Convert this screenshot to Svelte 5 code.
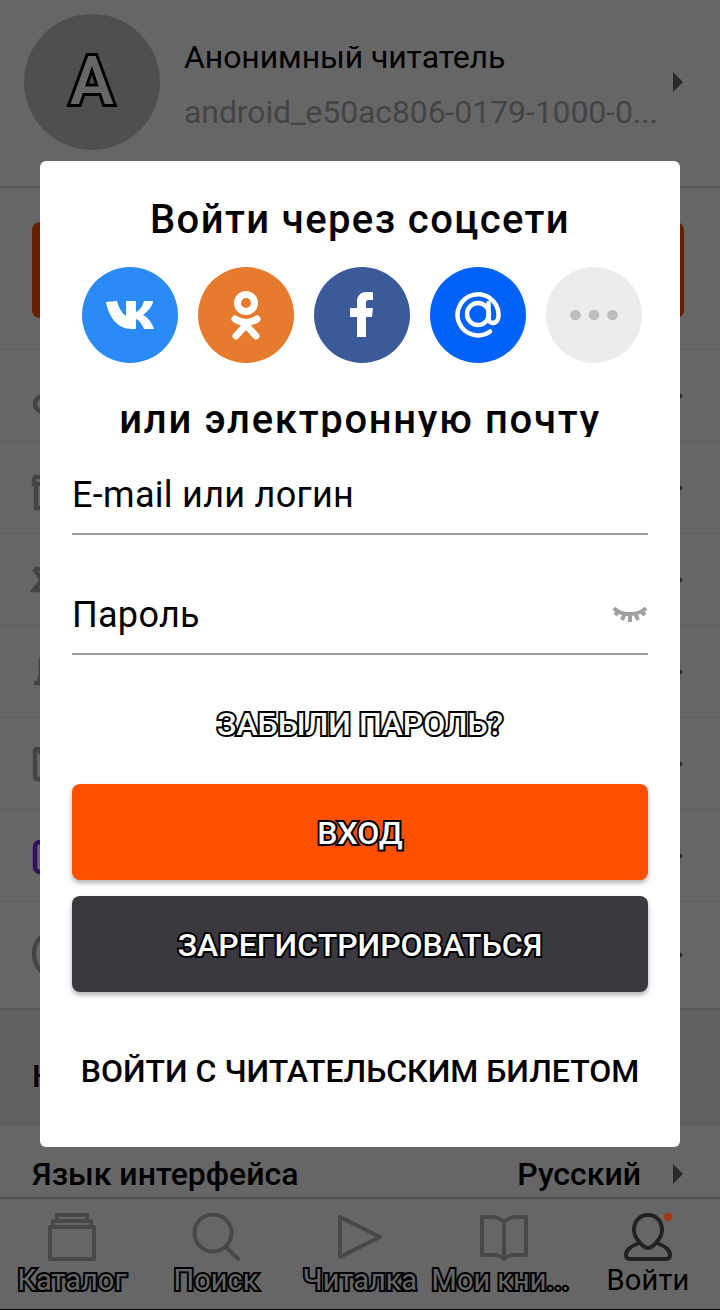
<script>
  const rows = [
    { icon: "M3 32a8 8 0 1 0 16 0a8 8 0 1 0-16 0" },
    { icon: "M2 13h10M2 13v7h10M4 22v22h10" },
    { icon: "M2 13h10M2 13l8 11L2 34h10" },
    { icon: "M2 35h10M6 35Q9 30 9 20V9" },
    { icon: "M10 9H5a2 2 0 0 0-2 2v26a2 2 0 0 0 2 2h6M5 9l8 8" },
    { icon: "M12 10H8a5 5 0 0 0-5 5v20a5 5 0 0 0 5 5h4", purple: true },
    { icon: "M2 23a24 24 0 1 0 48 0a24 24 0 1 0-48 0" }
  ];
  const tabs = [
    { label: "Каталог", outlined: true },
    { label: "Поиск", outlined: true },
    { label: "Читалка", outlined: true },
    { label: "Мои кни...", outlined: true },
    { label: "Войти", outlined: false }
  ];
</script>

<div class="page">
  <header class="profile">
    <div class="avatar"><span>A</span></div>
    <div class="who">
      <div class="name">Анонимный читатель</div>
      <div class="login">android_e50ac806-0179-1000-0...</div>
    </div>
    <i class="arrow"></i>
  </header>

  <section class="promo"><div class="promo-btn"></div></section>

  {#each rows as row, i}
    <div class="row" class:last={i === 6}>
      <svg class="row-icon" viewBox="0 0 48 48" class:purple={row.purple}>
        <path d={row.icon} />
      </svg>
      <i class="arrow"></i>
    </div>
  {/each}

  <section class="settings"><h3>Н</h3></section>

  <div class="lang">
    <span>Язык интерфейса</span>
    <span class="lang-value">Русский</span>
    <i class="arrow"></i>
  </div>

  <nav class="tabs">
    {#each tabs as tab, i}
      <div class="tab">
        <svg viewBox="0 0 48 48" class:active={i === 4}>
          {#if i === 0}
            <path d="M2 14h44v32H2zM5 14V8h38v6M9 8V2h30v6" />
          {:else if i === 1}
            <circle cx="21" cy="20" r="18.5" />
            <path d="M34 34l12 12" />
          {:else if i === 2}
            <path d="M4 4v40l40-20z" />
          {:else if i === 3}
            <path d="M24 9Q19 4 12 4H2v38h12q6 0 10 4q4-4 10-4h12V4H36Q29 4 24 9zM24 9v37" />
          {:else}
            <path d="M24 2C15 2 10 9 10 17c0 9 10 18 14 18s14-9 14-18C38 9 33 2 24 2z" />
            <path d="M15 30C8 33 2 36 2 42c0 3 2 4 5 4h34c3 0 5-1 5-4c0-6-6-9-13-12" />
          {/if}
        </svg>
        <span class:outlined={tab.outlined}>{tab.label}</span>
        {#if i === 4}<b class="dot"></b>{/if}
      </div>
    {/each}
  </nav>

  <div class="scrim"></div>

  <div class="modal">
    <h2 class="title">Войти через соцсети</h2>
    <div class="socials">
      <div class="social vk">
        <svg viewBox="0 0 96 96"><path class="fill" d="M24 35l11-1c2 8 6 13 9 15V34h10v11c3-1 7-6 8-11h9c0 5-6 11-10 14c4 2 9 7 11 14H62c-2-5-5-9-8-10v10h-4C36 62 27 51 24 35z" /></svg>
      </div>
      <div class="social ok">
        <svg viewBox="0 0 96 96">
          <circle class="line" cx="48" cy="36" r="8.5" />
          <path class="line" d="M37 52q11 7 22 0M48 58L38 69M48 58l10 11" />
        </svg>
      </div>
      <div class="social fb">
        <svg viewBox="0 0 96 96"><path class="fill" d="M43 70V50h-7v-9h7v-6c0-7 4-10 10-10c3 0 5 0 6 .5V33h-4c-3 0-3 2-3 4v4h7l-1 9h-6v20z" /></svg>
      </div>
      <div class="social mail">
        <svg viewBox="0 0 96 96">
          <circle class="line thin" cx="48" cy="47" r="11" />
          <path class="line thin" d="M60 64.5A20.5 20.5 0 1 1 68.5 47v2c0 4-2.500 7-5.500 7c-2.500 0-4.500-2-4.500-5V36" />
        </svg>
      </div>
      <div class="social more">
        <svg viewBox="0 0 96 96">
          <circle cx="29.500" cy="48" r="5.300" />
          <circle cx="48" cy="48" r="5.300" />
          <circle cx="66.500" cy="48" r="5.300" />
        </svg>
      </div>
    </div>
    <div class="clip"><h2 class="title wide">или электронную почту</h2></div>

    <div class="field first"><span>E-mail или логин</span></div>
    <div class="field">
      <span>Пароль</span>
      <svg class="eye" viewBox="0 0 36 18">
        <path d="M2 3C8 11 27 11 34 3M6 7L3 10M12 10l-2 5M18 11v6M24 10l2 5M30 7l3 3" />
      </svg>
    </div>

    <div class="forgot">ЗАБЫЛИ ПАРОЛЬ?</div>
    <div class="btn enter"><span>ВХОД</span></div>
    <div class="btn register"><span>ЗАРЕГИСТРИРОВАТЬСЯ</span></div>
    <div class="ticket">ВОЙТИ С ЧИТАТЕЛЬСКИМ БИЛЕТОМ</div>
  </div>
</div>

<style>
  :global(body) {
    margin: 0;
    background: #666;
  }
  .page {
    position: relative;
    width: 720px;
    height: 1310px;
    overflow: hidden;
    background: #fff;
    color: #000;
    font-family: Roboto, "Noto Sans", sans-serif;
    display: flex;
    flex-direction: column;
  }
  .profile {
    height: 188px;
    box-sizing: border-box;
    padding: 14px 37px 0 24px;
    border-bottom: 2px solid #ddd;
    display: flex;
    flex: none;
  }
  .avatar {
    width: 136px;
    height: 136px;
    border-radius: 50%;
    background: #c6c6c6;
    display: flex;
    align-items: center;
    justify-content: center;
    flex: none;
  }
  .avatar span {
    font-size: 66px;
    line-height: 1;
    font-weight: 500;
    color: #fff;
    -webkit-text-stroke: 6px #000;
    paint-order: stroke fill;
  }
  .who {
    margin-left: 24px;
    flex: 1;
    min-width: 0;
    padding-top: 23px;
  }
  .name {
    font-size: 32px;
    line-height: 40px;
    letter-spacing: -0.1px;
  }
  .login {
    font-size: 32px;
    line-height: 40px;
    margin-top: 15px;
    letter-spacing: -0.1px;
    color: #aaa;
    white-space: nowrap;
  }
  .arrow {
    flex: none;
    width: 0;
    height: 0;
    border-left: 10px solid #666;
    border-top: 10px solid transparent;
    border-bottom: 10px solid transparent;
    margin-left: auto;
    align-self: center;
  }
  .profile .arrow {
    margin-top: -36px;
  }
  .promo {
    height: 162px;
    box-sizing: border-box;
    padding: 34px 36px 0 32px;
    border-bottom: 1px solid #eee;
    flex: none;
  }
  .promo-btn {
    height: 96px;
    background: #ff5000;
    border-radius: 8px;
  }
  .row {
    height: 92px;
    box-sizing: border-box;
    padding: 0 37px 0 32px;
    border-bottom: 1px solid #eee;
    display: flex;
    align-items: center;
    flex: none;
  }
  .row.last {
    height: 108px;
    border-bottom: 2px solid #ddd;
  }
  .row-icon {
    width: 48px;
    height: 48px;
    overflow: visible;
    fill: none;
    stroke: #aaa;
    stroke-width: 4.5;
  }
  .row-icon.purple {
    stroke: #7d26f5;
  }
  .settings {
    height: 117px;
    box-sizing: border-box;
    padding: 14px 32px 0;
    background: #f0f0f0;
    flex: none;
    display: flex;
    align-items: center;
  }
  .settings h3 {
    margin: 0;
    width: 8px;
    overflow: hidden;
    font-size: 32px;
    font-weight: 500;
  }
  .lang {
    height: 70px;
    box-sizing: border-box;
    padding: 24px 37px 0 32px;
    display: flex;
    align-items: center;
    font-size: 32px;
    font-weight: 500;
    flex: none;
  }
  .lang-value {
    margin-left: auto;
  }
  .lang .arrow {
    margin-left: 32px;
  }
  .tabs {
    height: 113px;
    box-sizing: border-box;
    flex: none;
    border-top: 2px solid #ccc;
    border-bottom: 1px solid #000;
    display: flex;
    padding-top: 14px;
  }
  .tab {
    position: relative;
    width: 144px;
    display: flex;
    flex-direction: column;
    align-items: center;
  }
  .tab svg {
    width: 48px;
    height: 48px;
    fill: none;
    stroke: #b4b4b4;
    stroke-width: 4;
    stroke-linejoin: round;
    stroke-linecap: round;
  }
  .tab svg.active {
    stroke: #555;
  }
  .tab span {
    margin-top: 1px;
    font-size: 29px;
    line-height: 36px;
    white-space: nowrap;
    letter-spacing: 0.2px;
  }
  .tab span.outlined {
    color: #fff;
    -webkit-text-stroke: 4px #000;
    paint-order: stroke fill;
    letter-spacing: 0;
  }
  .tab:nth-child(4) span {
    margin-left: -7px;
  }
  .dot {
    position: absolute;
    z-index: 1;
    left: 88px;
    top: 0;
    width: 8px;
    height: 8px;
    border-radius: 50%;
    background: #a8380f;
  }
  .scrim {
    position: absolute;
    inset: 0;
    background: rgba(0, 0, 0, 0.6);
  }
  .modal {
    position: absolute;
    left: 40px;
    top: 161px;
    width: 640px;
    height: 986px;
    box-sizing: border-box;
    padding: 37px 32px 0;
    background: #fff;
    border-radius: 6px;
  }
  .title {
    margin: 0;
    font-size: 40px;
    line-height: 44px;
    font-weight: 500;
    letter-spacing: 1.4px;
    text-align: center;
    white-space: nowrap;
  }
  .title.wide {
    letter-spacing: 1.7px;
  }
  .socials {
    display: flex;
    gap: 20px;
    justify-content: center;
    margin-top: 25px;
    padding-left: 4px;
  }
  .social {
    width: 96px;
    height: 96px;
    border-radius: 50%;
    flex: none;
  }
  .social svg {
    display: block;
    width: 96px;
    height: 96px;
  }
  .fill {
    fill: #fff;
  }
  .line {
    fill: none;
    stroke: #fff;
    stroke-width: 7;
    stroke-linecap: round;
  }
  .line.thin {
    stroke-width: 4.500;
  }
  .vk {
    background: #2a8af6;
  }
  .ok {
    background: #e77b2d;
  }
  .fb {
    background: #3b5a9a;
  }
  .mail {
    background: #0062fb;
  }
  .more {
    background: #ececec;
    fill: #bdbdbd;
  }
  .clip {
    height: 39px;
    overflow: hidden;
    margin-top: 34px;
    padding-top: 1px;
  }
  .field {
    height: 97px;
    box-sizing: border-box;
    border-bottom: 2px solid #9e9e9e;
    display: flex;
    align-items: flex-end;
    justify-content: space-between;
    margin-top: 23px;
    font-size: 36px;
    line-height: 44px;
    letter-spacing: 0.3px;
    padding: 0 0 16px;
  }
  .field.first {
    margin-top: 0;
    height: 98px;
  }
  .eye {
    width: 36px;
    height: 18px;
    fill: none;
    stroke: #a0a0a0;
    stroke-width: 4;
    margin-bottom: 14px;
  }
  .forgot {
    margin-top: 49px;
    height: 40px;
    line-height: 40px;
    text-align: center;
    font-size: 32px;
    font-weight: 500;
    color: #fff;
    -webkit-text-stroke: 4px #000;
    paint-order: stroke fill;
  }
  .btn {
    height: 96px;
    box-sizing: border-box;
    padding-top: 2px;
    margin-top: 16px;
    border-radius: 8px;
    display: flex;
    align-items: center;
    justify-content: center;
    box-shadow: 0 3px 5px rgba(0, 0, 0, 0.3);
    font-size: 32px;
    font-weight: 500;
    color: #fff;
    -webkit-text-stroke: 4px #000;
  }
  .btn span {
    paint-order: stroke fill;
  }
  .enter {
    background: #ff5000;
    margin-top: 40px;
  }
  .register {
    background: #3b3840;
  }
  .ticket {
    margin-top: 59px;
    text-align: center;
    font-size: 32px;
    line-height: 40px;
    font-weight: 500;
    white-space: nowrap;
  }
</style>
